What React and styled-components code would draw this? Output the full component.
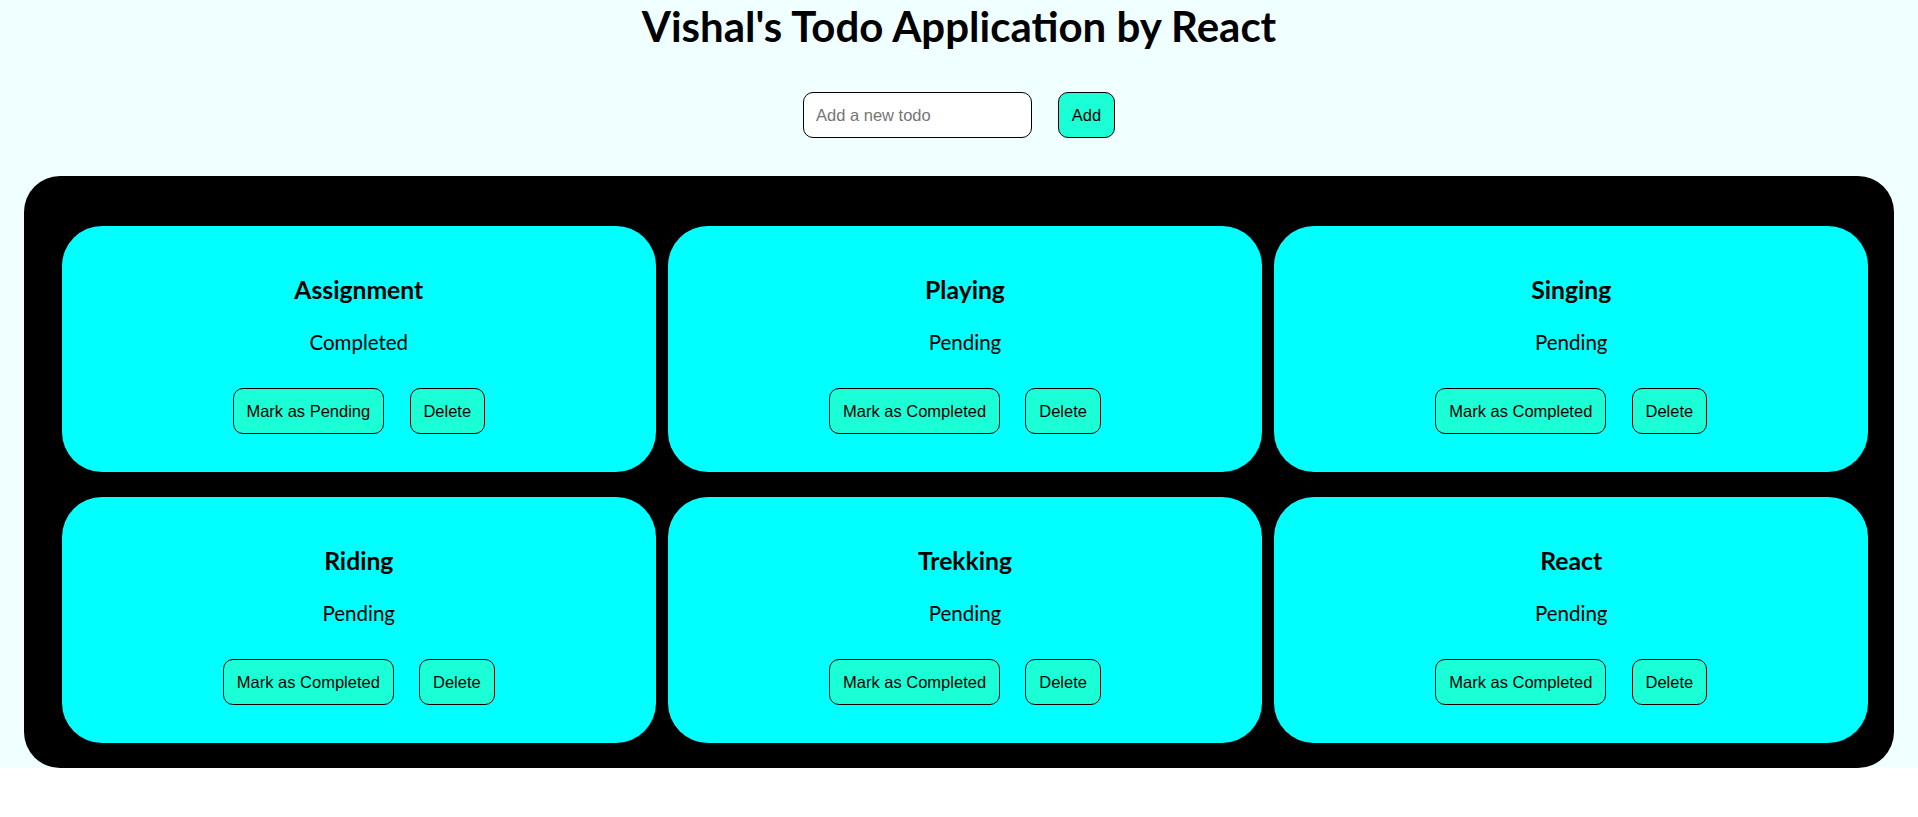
import styled, { createGlobalStyle } from "styled-components";

const GlobalStyle = createGlobalStyle`
  body {
    margin: 0;
    background: #ffffff;
    font-family: "Lato", "Open Sans", sans-serif;
  }
`;

const Page = styled.div`
  background: #f0ffff;
  display: flex;
  flex-direction: column;
  align-items: center;
`;

const Heading = styled.h1`
  margin: 1px 0 0;
  font-size: 42px;
  line-height: 50px;
  font-weight: 700;
  color: #000;
`;

const AddRow = styled.div`
  display: flex;
  align-items: center;
  gap: 26px;
  margin-top: 41px;
`;

const TodoInput = styled.input`
  box-sizing: border-box;
  width: 229px;
  height: 46px;
  padding: 0 12px;
  border: 1px solid #000;
  border-radius: 10px;
  background: #fff;
  font-family: "Liberation Sans", Arial, sans-serif;
  font-size: 16.5px;
  outline: none;

  &::placeholder {
    color: #757575;
  }
`;

const Button = styled.button`
  box-sizing: border-box;
  height: 46px;
  padding: 0 12.8px;
  border: 1px solid #000;
  border-radius: 10px;
  background: #1affd5;
  color: #000;
  font-family: "Liberation Sans", Arial, sans-serif;
  font-size: 16.5px;
  cursor: pointer;
`;

const Board = styled.div`
  align-self: stretch;
  margin: 38px 24px 0;
  padding: 50px 26px 25px 38px;
  background: #000;
  border-radius: 36px;
  display: grid;
  grid-template-columns: repeat(3, 1fr);
  column-gap: 12.7px;
  row-gap: 25px;
`;

const Card = styled.div`
  background: #00ffff;
  border-radius: 40px;
  padding: 48px 0 38px;
  display: flex;
  flex-direction: column;
  align-items: center;
`;

const CardTitle = styled.h2`
  margin: 0;
  font-size: 24.7px;
  line-height: 32px;
  font-weight: 700;
`;

const Status = styled.p`
  margin: 22px 0 0;
  font-size: 20.5px;
  line-height: 28px;
`;

const Actions = styled.div`
  display: flex;
  gap: 25.6px;
  margin-top: 32px;
`;

const todos = [
  { title: "Assignment", done: true },
  { title: "Playing", done: false },
  { title: "Singing", done: false },
  { title: "Riding", done: false },
  { title: "Trekking", done: false },
  { title: "React", done: false },
];

export default function App() {
  return (
    <>
      <GlobalStyle />
      <Page>
        <Heading>Vishal's Todo Application by React</Heading>
        <AddRow>
          <TodoInput placeholder="Add a new todo" />
          <Button>Add</Button>
        </AddRow>
        <Board>
          {todos.map((todo) => (
            <Card key={todo.title}>
              <CardTitle>{todo.title}</CardTitle>
              <Status>{todo.done ? "Completed" : "Pending"}</Status>
              <Actions>
                <Button>{todo.done ? "Mark as Pending" : "Mark as Completed"}</Button>
                <Button>Delete</Button>
              </Actions>
            </Card>
          ))}
        </Board>
      </Page>
    </>
  );
}
